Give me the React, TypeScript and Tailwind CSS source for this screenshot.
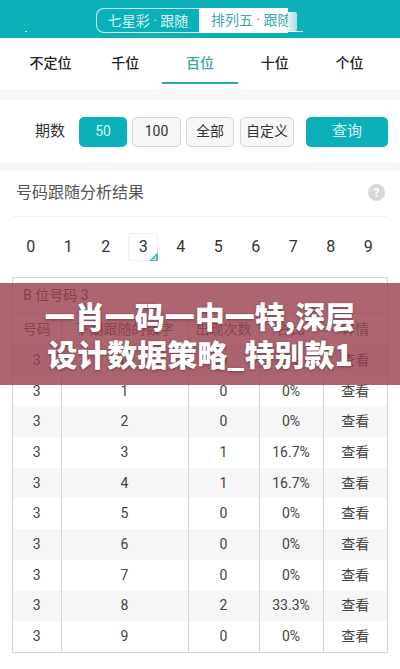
import React from "react";

const font = { fontFamily: 'Roboto, "Noto Sans CJK SC", sans-serif' };

const positions = ["不定位", "千位", "百位", "十位", "个位"];
const digits = ["0", "1", "2", "3", "4", "5", "6", "7", "8", "9"];
const rows = [
  ["3", "0", "0", "0%"],
  ["3", "1", "0", "0%"],
  ["3", "2", "0", "0%"],
  ["3", "3", "1", "16.7%"],
  ["3", "4", "1", "16.7%"],
  ["3", "5", "0", "0%"],
  ["3", "6", "0", "0%"],
  ["3", "7", "0", "0%"],
  ["3", "8", "2", "33.3%"],
  ["3", "9", "0", "0%"],
];

const colClass = "grid grid-cols-[48.5px_127px_71px_64px_1fr]";
const greyBtn = "h-[30px] rounded-[5px] border border-[#d5d5d5] bg-[#f7f7f7] flex items-center justify-center";

const App: React.FC = () => {
  return (
    <div className="relative w-[400px] h-[669px] overflow-hidden bg-white text-[#333]" style={font}>
      {/* Header */}
      <div className="relative h-[38px] bg-[#0bb0b8] pt-2 pl-[96px]">
        <div className="relative flex w-[192px] h-[25px] text-[14px] leading-[24px]">
          <div className="w-[103px] rounded-l-[8px] border border-white/80 border-r-0 text-center text-[#d8f4f5] whitespace-nowrap">
            七星彩 · 跟随
          </div>
          <div className="w-[89px] bg-white pl-[12px] whitespace-nowrap overflow-hidden text-[#3aa9ae]">
            排列五 · 跟随
          </div>
        </div>
        <div className="absolute left-[288px] top-[12px] w-[9px] h-[19px] rounded-r-[2px] bg-gradient-to-r from-[#e4f4f5] to-[#a9dfe2]" />
        <div className="absolute left-[288px] top-[31px] w-[15px] h-[1px] bg-white" />
        <div className="absolute left-[25px] top-[31px] w-[2px] h-[1px] bg-white" />
      </div>

      {/* Position tabs */}
      <div className="h-[52px] grid grid-cols-5 px-[13px] text-[14px] font-medium text-[#222]">
        {positions.map((p) => (
          <div key={p} className="relative flex items-center justify-center pb-[2px]">
            <span className={p === "百位" ? "text-[#3aa5ab]" : ""}>{p}</span>
            {p === "百位" && (
              <div className="absolute left-[-1px] right-[-1px] bottom-[6px] h-[2px] bg-[#2ea8ae]" />
            )}
          </div>
        ))}
      </div>
      <div className="h-[10px] bg-[#f6f6f6]" />

      {/* Period filter */}
      <div className="h-[63px] flex items-center pl-[35px] text-[14px]">
        <span className="w-[44px] text-[15px] text-[#333]">期数</span>
        <div className="w-[48px] h-[30px] rounded-[5px] bg-[#0bb0b8] text-[#d8f4f5] flex items-center justify-center">
          50
        </div>
        <div className={`ml-[5px] w-[49px] ${greyBtn}`}>100</div>
        <div className={`ml-[5px] w-[48px] ${greyBtn}`}>全部</div>
        <div className={`ml-[6px] w-[54px] ${greyBtn}`}>自定义</div>
        <div className="ml-[12px] w-[82px] h-[30px] rounded-[5px] bg-[#0bb0b8] text-[#d8f4f5] text-[15px] flex items-center justify-center">
          查询
        </div>
      </div>
      <div className="h-[8px] bg-[#f6f6f6]" />

      {/* Results */}
      <div className="h-[46px] mx-[12px] flex items-center justify-between border-b border-[#f3f3f3] pl-[4px] pr-[3px] pb-[2px]">
        <span className="text-[16px] text-[#555]">号码跟随分析结果</span>
        <div className="w-[17px] h-[17px] rounded-full bg-[#d8d8d8] text-white text-[12px] font-bold flex items-center justify-center">
          ?
        </div>
      </div>

      <div className="h-[60px] pl-[12px] pr-[13px] grid grid-cols-10 items-center text-[16px] text-[#333]">
        {digits.map((d) => (
          <div key={d} className="flex justify-center">
            {d === "3" ? (
              <div className="relative w-[30px] h-[28px] rounded-[3px] border border-[#eeeeee] flex items-center justify-center">
                {d}
                <svg className="absolute right-[-1px] bottom-[-1px]" width="9" height="9" viewBox="0 0 9 9">
                  <path d="M9 0V9H0Z" fill="#4bb8bd" />
                  <path d="M6.5 4.5V7.5H3.5" fill="none" stroke="#fff" strokeWidth="0.8" />
                </svg>
              </div>
            ) : (
              d
            )}
          </div>
        ))}
      </div>

      {/* Table */}
      <div className="mx-[12px] border border-[#d6d6d6] text-[14px] text-[#444]">
        <div className="h-[36px] flex items-center pl-[10px] border-b border-[#e2e2e2]">B 位号码 3</div>
        <div className={`${colClass} h-[31px] items-center text-center text-[#555]`}>
          {["号码", "下期跟随的数字", "出现次数", "占比", "详情"].map((h) => (
            <div key={h} className="h-full flex items-center justify-center border-r border-[#d6d6d6] last:border-r-0">
              {h}
            </div>
          ))}
        </div>
        {rows.map((r, i) => (
          <div key={r[1]} className={`${colClass} h-[30.7px] text-center ${i % 2 === 0 ? "bg-[#f6f6f6]" : "bg-white"}`}>
            {[...r, "查看"].map((c, j) => (
              <div key={j} className="h-full flex items-center justify-center border-r border-[#d6d6d6] last:border-r-0">
                {c}
              </div>
            ))}
          </div>
        ))}
      </div>

      {/* Title banner */}
      <div className="absolute left-0 top-[283px] w-full h-[102px] bg-[#983f4d]/80 flex flex-col items-center justify-center text-white text-[30px] font-black leading-[38px] [font-family:'Noto_Sans_CJK_SC',sans-serif] [text-shadow:0_1px_3px_rgba(0,0,0,0.35)]">
        <div className="whitespace-nowrap">一肖一码一中一特,深层</div>
        <div className="whitespace-nowrap">设计数据策略_特别款1</div>
      </div>
    </div>
  );
};

export default App;
